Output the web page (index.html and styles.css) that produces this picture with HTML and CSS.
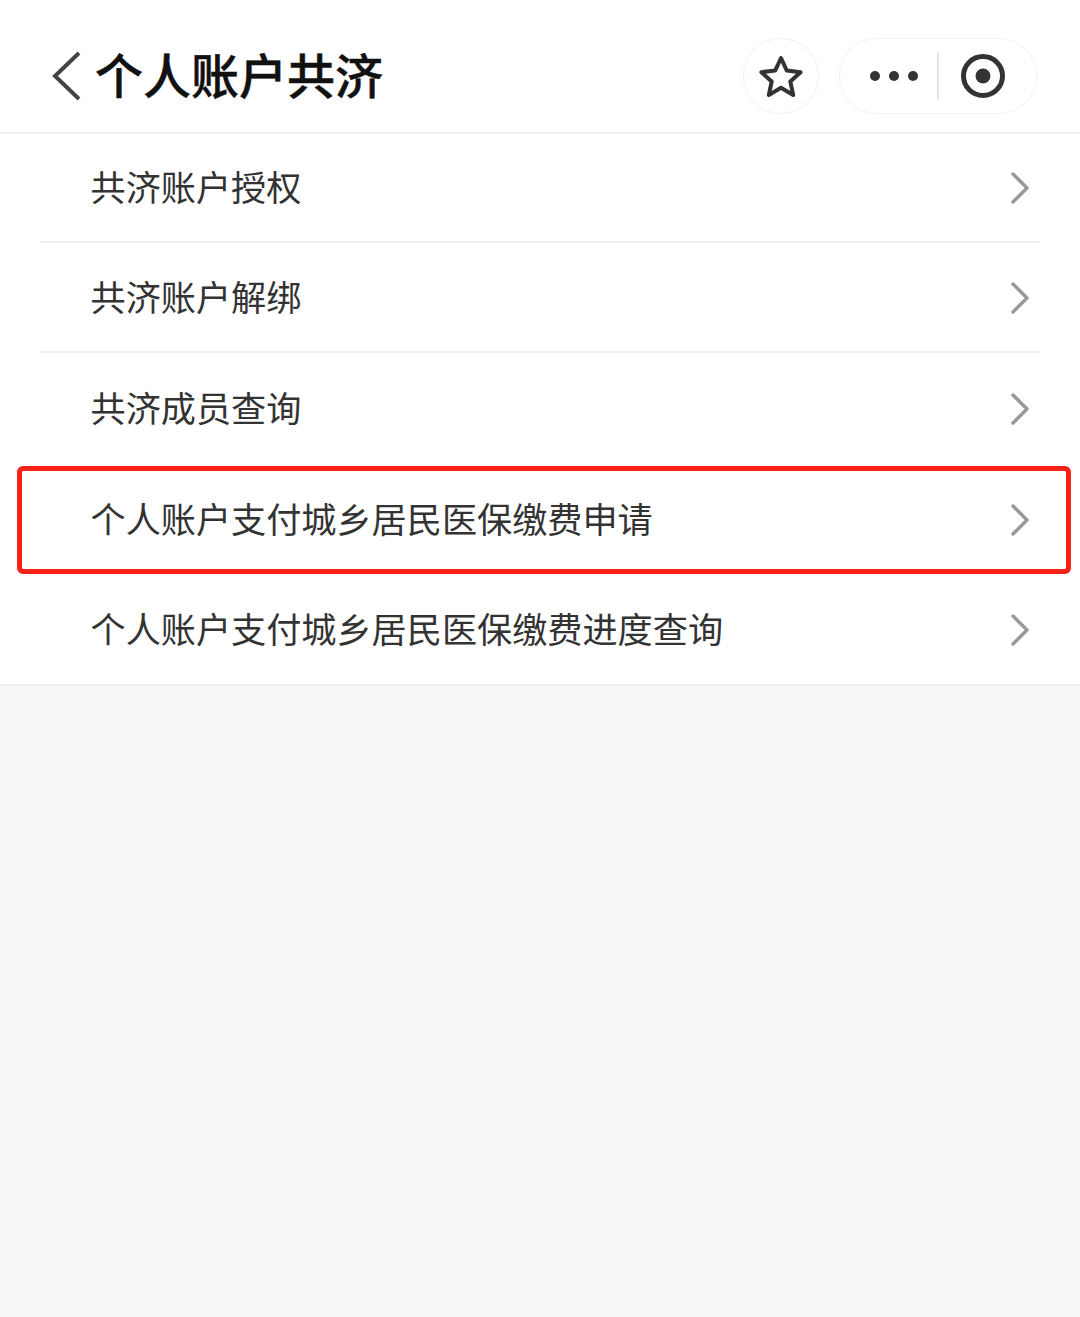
FILE: index.html
```html
<!DOCTYPE html>
<html lang="zh-CN">
<head>
    <meta charset="UTF-8">
    <title>个人账户共济</title>
    <link rel="stylesheet" href="styles.css">
</head>
<body>
    <header class="nav">
        <svg class="back" width="32" height="50" viewBox="0 0 32 50" fill="none">
            <path d="M28 2L4 25l24 23" stroke="#444" stroke-width="4"/>
        </svg>
        <h1 class="title">个人账户共济</h1>
        <div class="star-btn">
            <svg width="46" height="44" viewBox="0 0 46 44" fill="none">
                <path d="M23 4l5.800 12.600 13.800 1.600-10.300 9.300 2.900 13.500L23 33.700l-12.200 7.300 2.900-13.500L3.400 18.200l13.800-1.600z" stroke="#333" stroke-width="4" stroke-linejoin="round"/>
            </svg>
        </div>
        <div class="capsule">
            <div class="dots"><i></i><i></i><i></i></div>
            <div class="capsule-line"></div>
            <svg class="target" width="46" height="46" viewBox="0 0 46 46" fill="none">
                <circle cx="23" cy="23" r="19.500" stroke="#333" stroke-width="5"/>
                <circle cx="23" cy="23" r="7.500" fill="#333"/>
            </svg>
        </div>
    </header>

    <ul class="menu">
        <li class="item"><span>共济账户授权</span>
            <svg class="arrow" width="20" height="34" viewBox="0 0 20 34" fill="none"><path d="M3 3l14 14L3 31" stroke="#999" stroke-width="3.500" stroke-linecap="round" stroke-linejoin="round"/></svg>
        </li>
        <li class="item"><span>共济账户解绑</span>
            <svg class="arrow" width="20" height="34" viewBox="0 0 20 34" fill="none"><path d="M3 3l14 14L3 31" stroke="#999" stroke-width="3.500" stroke-linecap="round" stroke-linejoin="round"/></svg>
        </li>
        <li class="item"><span>共济成员查询</span>
            <svg class="arrow" width="20" height="34" viewBox="0 0 20 34" fill="none"><path d="M3 3l14 14L3 31" stroke="#999" stroke-width="3.500" stroke-linecap="round" stroke-linejoin="round"/></svg>
        </li>
        <li class="item item-marked"><span>个人账户支付城乡居民医保缴费申请</span>
            <svg class="arrow" width="20" height="34" viewBox="0 0 20 34" fill="none"><path d="M3 3l14 14L3 31" stroke="#999" stroke-width="3.500" stroke-linecap="round" stroke-linejoin="round"/></svg>
            <div class="red-box"></div>
        </li>
        <li class="item"><span>个人账户支付城乡居民医保缴费进度查询</span>
            <svg class="arrow" width="20" height="34" viewBox="0 0 20 34" fill="none"><path d="M3 3l14 14L3 31" stroke="#999" stroke-width="3.500" stroke-linecap="round" stroke-linejoin="round"/></svg>
        </li>
    </ul>
</body>
</html>
```

FILE: styles.css
```css
* {
  box-sizing: border-box;
}

body {
  margin: 0;
  height: 1317px;
  overflow: hidden;
  background-color: #f6f7f9;
  font-family: "Noto Sans CJK SC", "Liberation Sans", sans-serif;
}

.nav {
  height: 134px;
  display: flex;
  align-items: center;
  padding: 20px 43px 0 51px;
  background: #fff;
  border-bottom: 2px solid #f1f1f1;
}

.back {
  flex: none;
}

.title {
  flex: 1;
  margin: 0 0 6px 12px;
  font-size: 48px;
  font-weight: 500;
  line-height: 1;
  color: #111;
  -webkit-text-stroke: 0.5px #111;
}

.star-btn {
  width: 76px;
  height: 76px;
  margin-right: 20px;
  display: flex;
  justify-content: center;
  align-items: center;
  border: 1.500px solid #f0f0f0;
  border-radius: 50%;
}

.capsule {
  width: 198px;
  height: 76px;
  display: flex;
  align-items: center;
  border: 1.500px solid #f0f0f0;
  border-radius: 38px;
  padding-left: 30px;
}

.dots {
  display: flex;
  gap: 9px;
}

.dots i {
  width: 10px;
  height: 10px;
  border-radius: 50%;
  background: #333;
}

.capsule-line {
  width: 2px;
  height: 46px;
  margin: 0 21px 0 19px;
  background: #e4e4e4;
}

.menu {
  margin: 0;
  padding: 0;
  list-style: none;
  background: #fff;
  border-bottom: 2px solid #eeeeee;
}

.item {
  position: relative;
  height: 110.400px;
  margin: 0 40px;
  padding: 2px 10px 0 50.500px;
  display: flex;
  align-items: center;
  justify-content: space-between;
  font-size: 35.150px;
  color: #333;
  border-bottom: 2px solid #f1f1f1;
}

.item:first-child {
  height: 108.600px;
}

.item:last-child {
  height: 110px;
}

.item span {
  margin-bottom: 6px;
}

.item:nth-child(3),
.item:nth-child(4),
.item:last-child {
  border-bottom: 0;
}

.item:nth-child(2) span,
.item:nth-child(4) span,
.item:last-child span {
  margin-bottom: 4px;
}

.arrow {
  flex: none;
}

.red-box {
  position: absolute;
  left: -23px;
  right: -31px;
  top: 3px;
  height: 108px;
  border: 5px solid #fa1f17;
  border-radius: 6px;
}
```
